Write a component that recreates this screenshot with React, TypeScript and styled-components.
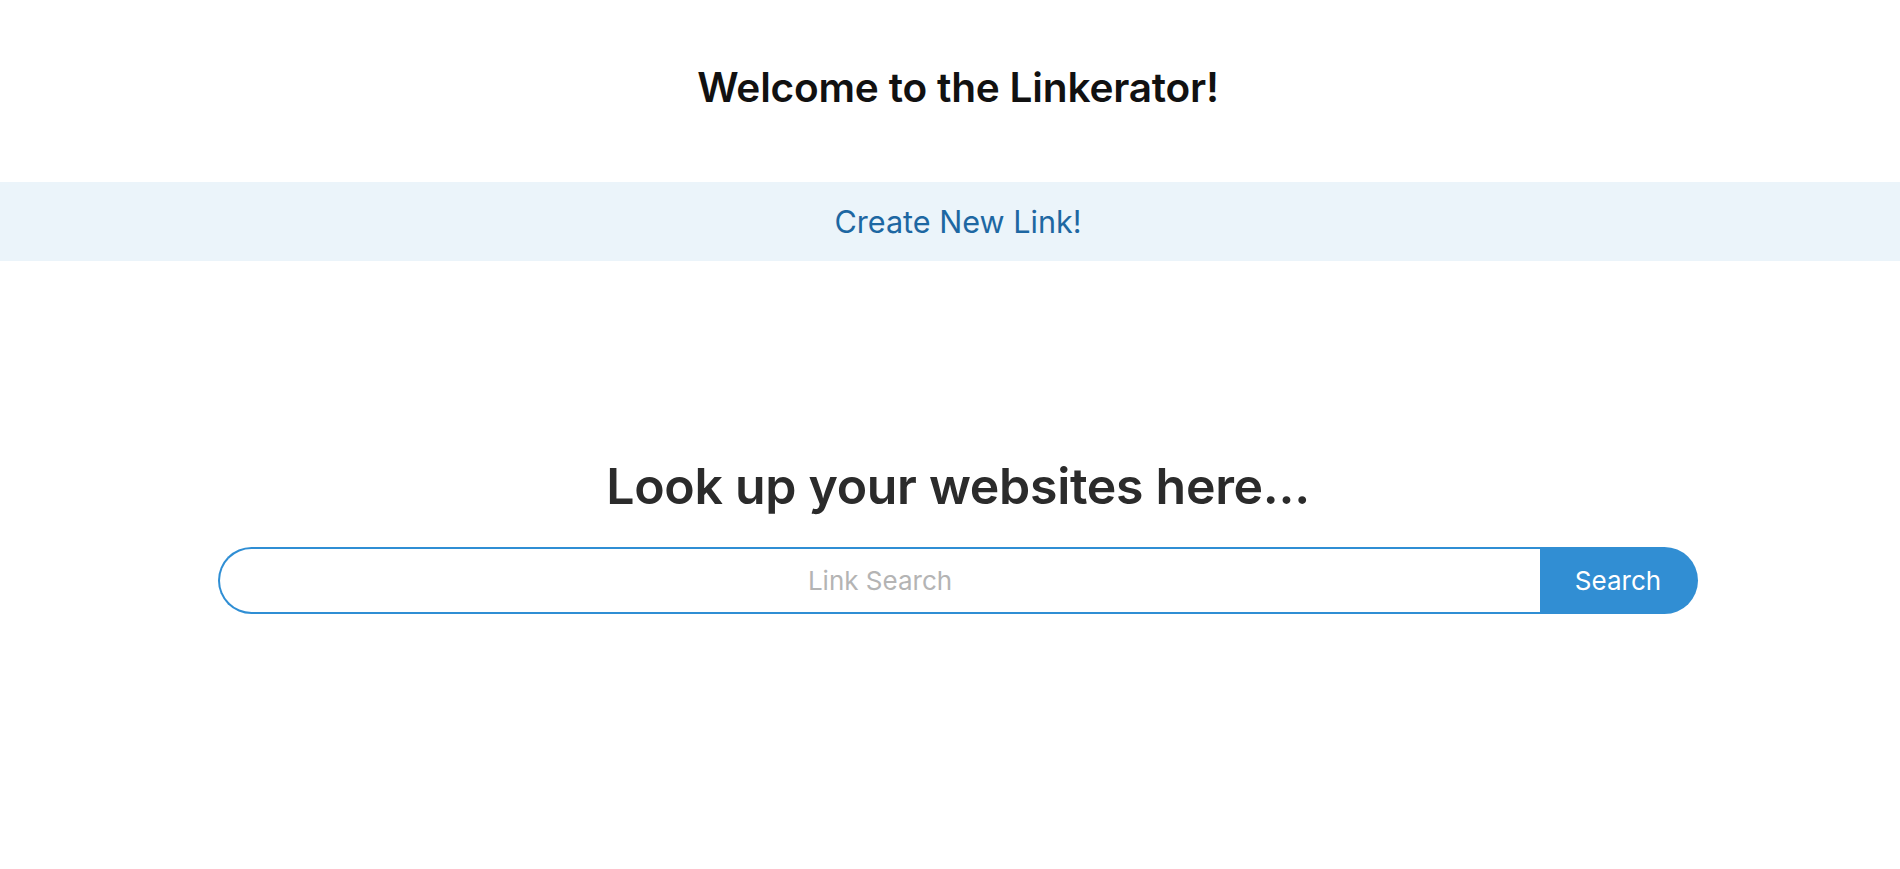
import React from "react";
import styled, { createGlobalStyle } from "styled-components";

const Global = createGlobalStyle`
  html, body { margin: 0; padding: 0; background: #ffffff; }
  body { font-family: Inter, "Noto Sans", "Liberation Sans", sans-serif; }
  * { box-sizing: border-box; }
`;

const Page = styled.div`
  width: 1900px;
  min-height: 869px;
  display: flex;
  flex-direction: column;
`;

const Header = styled.header`
  height: 182px;
  display: flex;
  align-items: center;
  justify-content: center;
  padding-left: 16px;
  padding-bottom: 8px;
`;

const Title = styled.h1`
  margin: 0;
  font-size: 40.6px;
  font-weight: 600;
  color: #111111;
  letter-spacing: -0.2px;
`;

const Banner = styled.nav`
  height: 79px;
  background: #ebf4fa;
  display: flex;
  align-items: center;
  justify-content: center;
  padding-left: 16px;
`;

const BannerLink = styled.a`
  font-size: 30.6px;
  font-weight: 400;
  color: #1d67a2;
  text-decoration: none;
  cursor: pointer;
`;

const Main = styled.main`
  display: flex;
  flex-direction: column;
  align-items: center;
  padding-top: 194px;
  padding-left: 16px;
`;

const Heading = styled.h2`
  margin: 0 0 30px;
  font-size: 50px;
  font-weight: 600;
  color: #2b2b2b;
  line-height: 62px;
  letter-spacing: -0.3px;
`;

const SearchForm = styled.form`
  width: 1480px;
  height: 67px;
  display: flex;
`;

const SearchInput = styled.input`
  flex: 1;
  height: 100%;
  border: 2px solid #2f8ed4;
  border-right: none;
  border-radius: 34px 0 0 34px;
  font-family: inherit;
  font-size: 26px;
  color: #333;
  text-align: center;
  outline: none;
  background: #fff;
  &::placeholder { color: #b4b4b4; }
`;

const SearchButton = styled.button`
  width: 158px;
  height: 100%;
  border: none;
  background: #318ed3;
  color: #ffffff;
  font-family: inherit;
  font-size: 26px;
  border-radius: 0 34px 34px 0;
  cursor: pointer;
  padding: 0 2px 0 0;
`;

export default function App() {
  return (
    <>
      <Global />
      <Page>
        <Header>
          <Title>Welcome to the Linkerator!</Title>
        </Header>
        <Banner>
          <BannerLink>Create New Link!</BannerLink>
        </Banner>
        <Main>
          <Heading>Look up your websites here...</Heading>
          <SearchForm onSubmit={(e) => e.preventDefault()}>
            <SearchInput placeholder="Link Search" />
            <SearchButton type="submit">Search</SearchButton>
          </SearchForm>
        </Main>
      </Page>
    </>
  );
}
